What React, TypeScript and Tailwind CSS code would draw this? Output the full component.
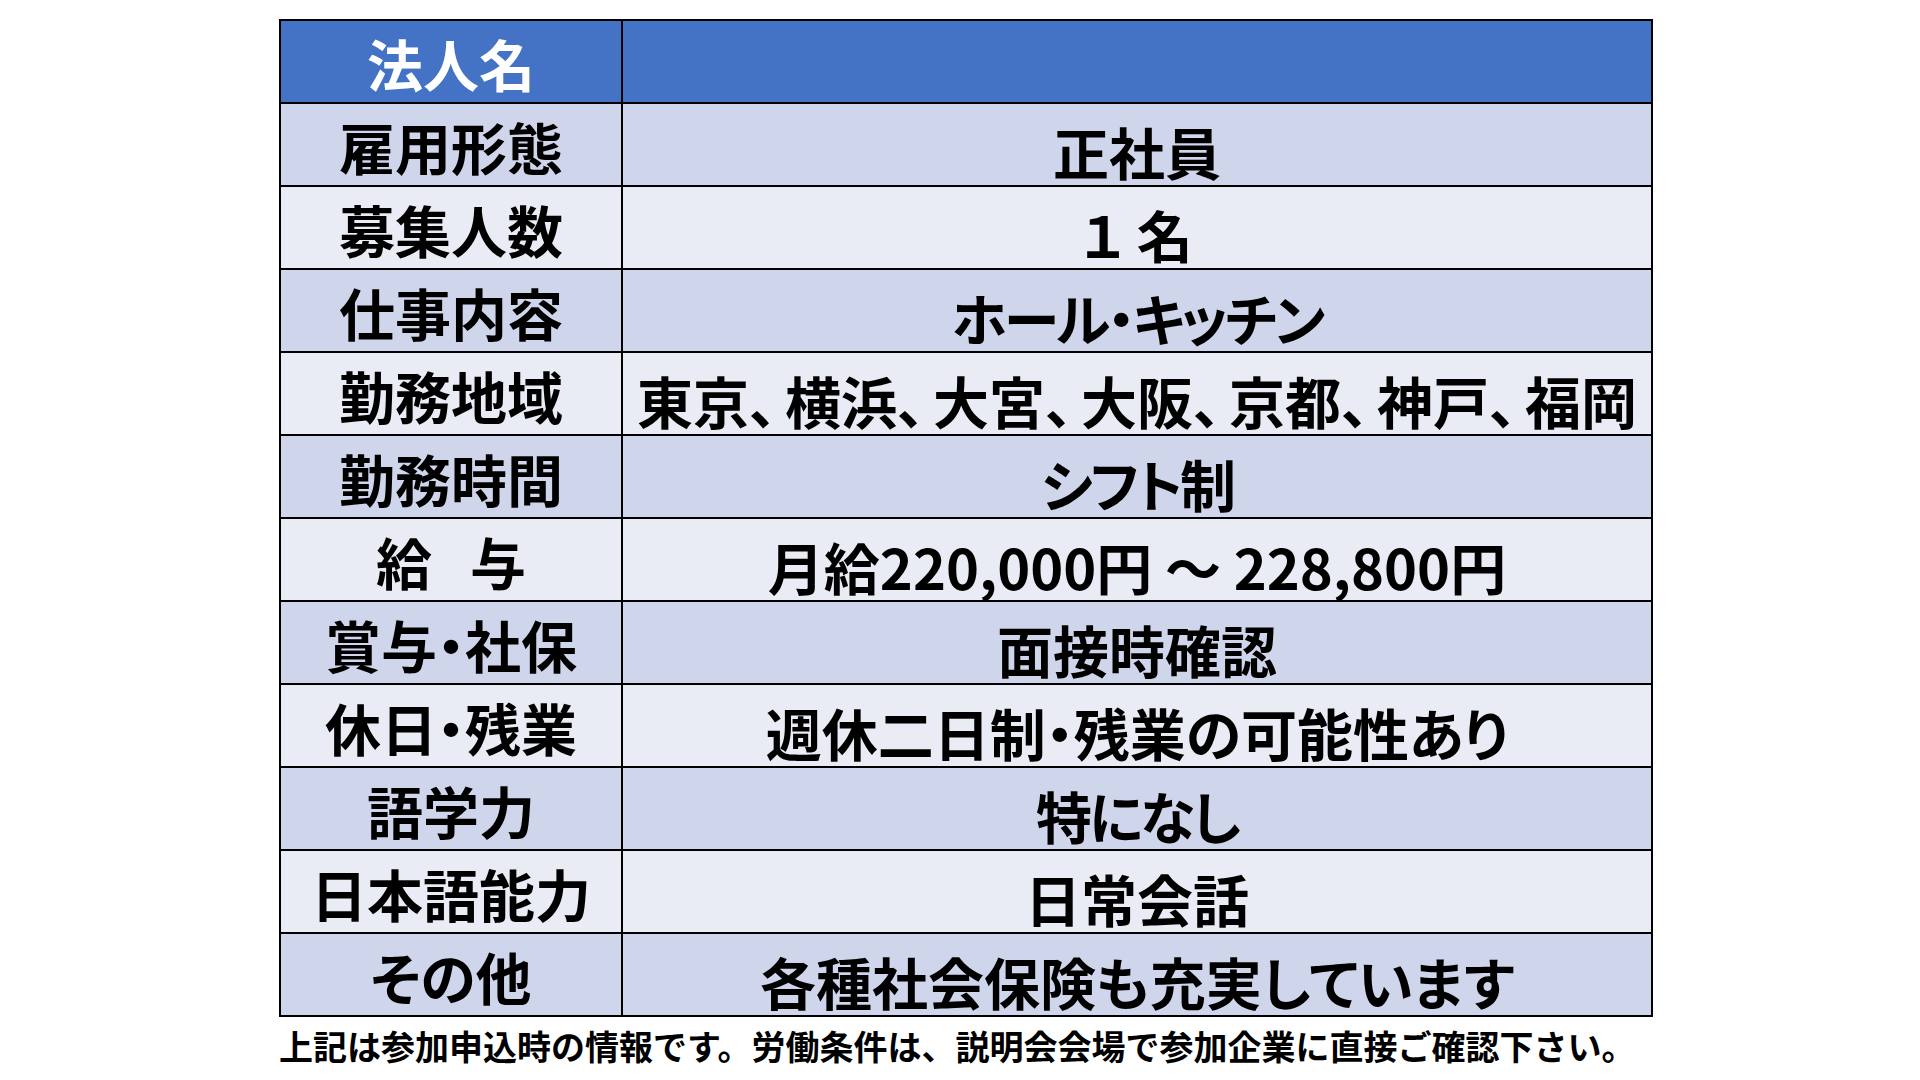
const FONT = "font-['Noto_Sans_CJK_JP','Noto_Sans',sans-serif]";

type Row = { label: React.ReactNode; value: React.ReactNode; tight?: boolean };

// palt で半角幅になる読点を参照の幅まで広げる
const Sep = () => <span className="tracking-[8px]">、</span>;

const rows: Row[] = [
  { label: '雇用形態', value: '正社員' },
  { label: '募集人数', value: '１ 名' },
  { label: '仕事内容', value: 'ホール・キッチン', tight: true },
  {
    label: '勤務地域',
    value: (
      <>
        東京<Sep />横浜<Sep />大宮<Sep />大阪<Sep />京都<Sep />神戸<Sep />福岡
      </>
    ),
  },
  { label: '勤務時間', value: 'シフト制', tight: true },
  {
    label: (
      <>
        給<span className="ml-[38px]">与</span>
      </>
    ),
    value: '月給220,000円 ～ 228,800円',
  },
  { label: '賞与・社保', value: '面接時確認' },
  { label: '休日・残業', value: '週休二日制・残業の可能性あり' },
  { label: '語学力', value: '特になし', tight: true },
  { label: '日本語能力', value: '日常会話' },
  { label: 'その他', value: '各種社会保険も充実しています' },
];

export default function App() {
  return (
    <div className={`w-[1920px] h-[1080px] bg-white pl-[279px] pt-[19px] ${FONT}`}>
      <div className="w-[1374px] border-2 border-black flex flex-col">
        {/* 見出し */}
        <div className="flex h-[81px] bg-[#4472c4]">
          <div className="w-[342px] border-r-2 border-black flex items-center justify-center pt-[2px] text-[56px] leading-none font-bold text-white">
            法人名
          </div>
          <div className="flex-1" />
        </div>

        {rows.map((r, i) => (
          <div
            key={i}
            className={`flex h-[83px] border-t-2 border-black ${i % 2 === 0 ? 'bg-[#cfd5ea]' : 'bg-[#e9ebf5]'}`}
          >
            <div className="w-[342px] border-r-2 border-black flex items-center justify-center pt-[2px] text-[56px] leading-none font-bold text-black whitespace-nowrap [font-feature-settings:'palt']">
              {r.label}
            </div>
            <div
              className={`flex-1 flex items-center justify-center pt-[12px] text-[56px] leading-none font-bold text-black whitespace-nowrap [font-feature-settings:'palt'] ${
                r.tight ? 'tracking-[-3px]' : ''
              }`}
            >
              {r.value}
            </div>
          </div>
        ))}
      </div>

      <p className="mt-[12px] text-[34px] leading-none font-bold text-black whitespace-nowrap">
        上記は参加申込時の情報です。労働条件は、説明会会場で参加企業に直接ご確認下さい。
      </p>
    </div>
  );
}
